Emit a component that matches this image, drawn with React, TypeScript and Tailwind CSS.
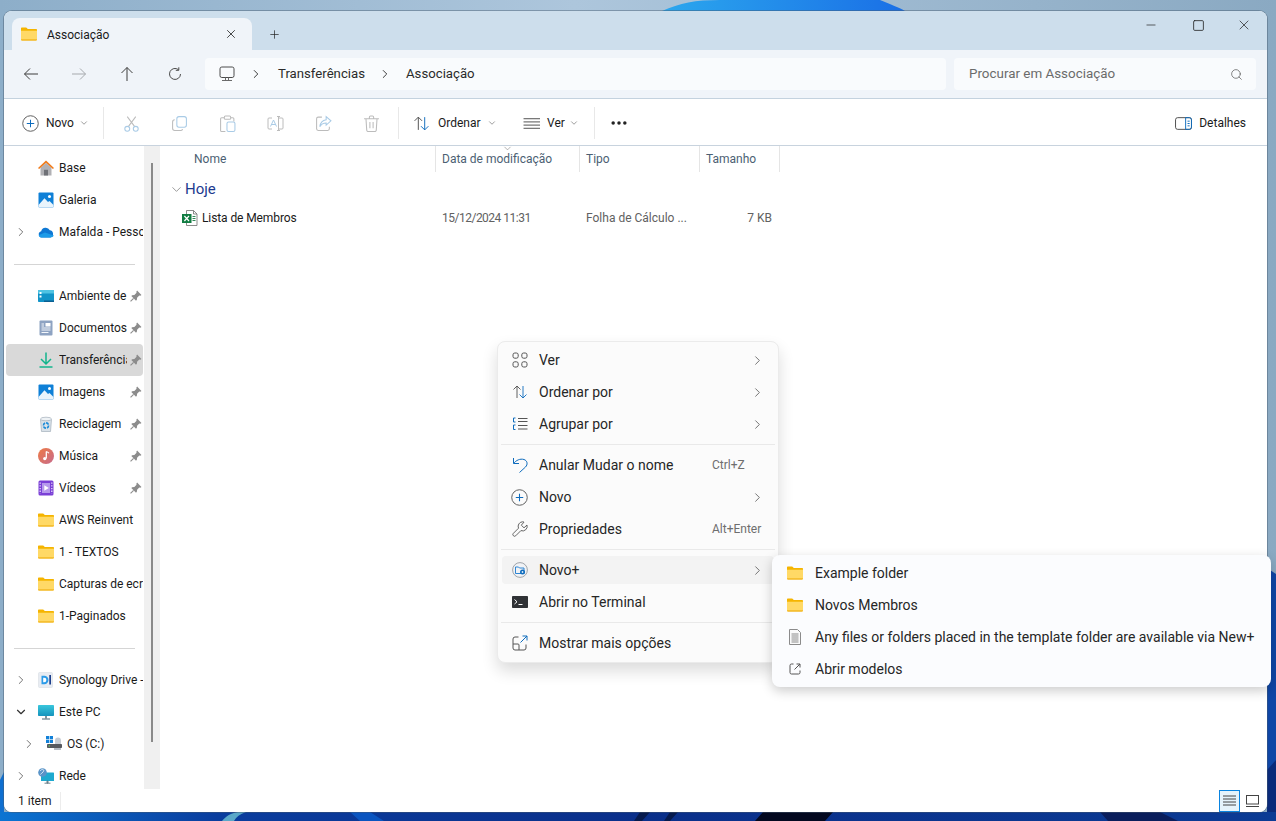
import type { ReactNode } from "react";
import { ChevronDown, ChevronRight, Ellipsis, Minus, Plus, Search, Square, X } from "lucide-react";

const font = { fontFamily: "Roboto, 'Liberation Sans', sans-serif" };

type IconProps = { size?: number };

function Svg({ size = 16, box = 16, children }: { size?: number; box?: number; children: ReactNode }) {
  return (
    <svg width={size} height={size} viewBox={`0 0 ${box} ${box}`} fill="none" className="shrink-0">
      {children}
    </svg>
  );
}

function FolderIcon({ size = 16 }: IconProps) {
  return (
    <Svg size={size}>
      <path d="M0 2.500c0-.6.4-1 1-1h4.200l1.600 1.600H15c.6 0 1 .4 1 1V6H0z" fill="#f5b400" />
      <path d="M0 4.800h16V13.500c0 .6-.4 1-1 1H1c-.6 0-1-.4-1-1z" fill="#ffd966" />
      <path d="M0 13.400h16v.2c0 .5-.4.900-1 .900H1c-.6 0-1-.4-1-.900z" fill="#eea800" />
    </Svg>
  );
}

function HomeIcon() {
  return (
    <Svg>
      <path d="M2.500 7.800 8 2.800l5.500 5V15.500h-11z" fill="#b1b1b5" />
      <rect x="6" y="9.800" width="4" height="5.700" fill="#6f7177" />
      <path d="M0 8 8 .5 16 8l-1.100 1.100L8 2.800 1.100 9.100z" fill="#f07a1a" />
    </Svg>
  );
}

function PictureIcon() {
  return (
    <Svg>
      <rect x="0.500" y="0.500" width="15" height="15" rx="1" fill="#0f80d7" />
      <circle cx="11.500" cy="4.500" r="1.500" fill="#fff" />
      <path d="M.5 13 6.500 6.200 10 10l1.500-1 4 4v1.500a1 1 0 0 1-1 1h-13a1 1 0 0 1-1-1z" fill="#e9f4fc" />
    </Svg>
  );
}

function CloudIcon() {
  return (
    <Svg>
      <path d="M3.600 13.500A3.200 3.200 0 0 1 3.200 7.200 4.600 4.600 0 0 1 11.800 6.300 3.700 3.700 0 0 1 12.500 13.500z" fill="#0f78d4" />
      <path d="M3.600 13.500c-1 0-2.600-.7-3-2.300L7 8.600l8.800 3c-.6 1.300-1.800 1.900-3.300 1.900z" fill="#1d9be8" />
    </Svg>
  );
}

function DesktopIcon() {
  return (
    <Svg>
      <rect x="0" y="2" width="16" height="12" rx="0.800" fill="#1294c8" />
      <rect x="0" y="2" width="16" height="3.500" fill="#4fc3e3" />
      <rect x="1.500" y="4" width="2" height="2" fill="#fff" />
      <rect x="1.500" y="7.500" width="2" height="2" fill="#fff" />
      <rect x="6" y="12.500" width="10" height="1.500" fill="#0b5f92" />
    </Svg>
  );
}

function DocsIcon() {
  return (
    <Svg>
      <rect x="1.500" y="0.500" width="13" height="15" rx="1" fill="#8ea3c2" />
      <rect x="7.500" y="3" width="5" height="3.500" fill="#fff" />
      <path d="M3.500 8h9M3.500 10h9M3.500 12.500h7M3.500 4h2.500M3.500 6h2.500" stroke="#f4f7fb" />
    </Svg>
  );
}

function DownloadIcon() {
  return (
    <Svg>
      <path d="M8 .5v11M3 7 8 12l5-5" stroke="#12b48c" strokeWidth="1.500" />
      <path d="M1.500 15h13" stroke="#12b48c" strokeWidth="1.500" />
    </Svg>
  );
}

function BinIcon() {
  return (
    <Svg>
      <path d="M2.500 3.500h11l-1 12h-9z" fill="#d9e1e8" stroke="#a4afba" strokeWidth="0.700" />
      <ellipse cx="8" cy="3" rx="5.500" ry="1.800" fill="#eef2f5" stroke="#a4afba" strokeWidth="0.700" />
      <circle cx="8" cy="9.500" r="2.600" fill="none" stroke="#1a8ad8" strokeWidth="1.600" strokeDasharray="3 1" />
    </Svg>
  );
}

function MusicIcon() {
  return (
    <Svg>
      <defs>
        <linearGradient id="mus" x1="0" y1="0" x2="1" y2="1">
          <stop offset="0" stopColor="#ee7a45" />
          <stop offset="1" stopColor="#c76b8c" />
        </linearGradient>
      </defs>
      <circle cx="8" cy="8" r="8" fill="url(#mus)" />
      <path d="M8.300 3.500v6.800" stroke="#fff" strokeWidth="1.300" />
      <path d="M8.300 3.500c1 .3 2.200.7 2.600 1.800" stroke="#fff" strokeWidth="1.100" />
      <circle cx="6.800" cy="10.600" r="1.700" fill="#fff" />
    </Svg>
  );
}

function VideoIcon() {
  return (
    <Svg>
      <rect x="0.500" y="0.500" width="15" height="15" rx="1.500" fill="#7a3fd6" />
      <rect x="4" y="3" width="8" height="10" fill="#b598ec" />
      <path d="M6.300 5.300v5.400L10.800 8z" fill="#fff" />
      <path d="M2.200 2.500v11M13.800 2.500v11" stroke="#e6dcfa" strokeWidth="1.300" strokeDasharray="1.300 1.400" />
    </Svg>
  );
}

function SynologyIcon() {
  return (
    <Svg>
      <rect x="0.500" y="0.500" width="14" height="15" rx="1" fill="#e8ecf2" stroke="#d2d8e0" strokeWidth="0.500" />
      <path d="M3.500 3.800h2.800a4.200 4.200 0 0 1 0 8.400H3.500z" fill="#2c9be8" />
      <path d="M5.200 5.800h1a2.200 2.200 0 0 1 0 4.400h-1z" fill="#fff" />
      <rect x="11.300" y="3" width="1.700" height="9.500" fill="#1d3f8c" />
    </Svg>
  );
}

function PcIcon() {
  return (
    <Svg>
      <defs>
        <linearGradient id="pc" x1="0" y1="0" x2="0" y2="1">
          <stop offset="0" stopColor="#39c6dc" />
          <stop offset="1" stopColor="#1694bd" />
        </linearGradient>
      </defs>
      <rect x="0" y="1" width="16" height="11" rx="0.800" fill="url(#pc)" />
      <path d="M7.300 12h1.400v2.500H7.300z" fill="#4b6473" />
      <path d="M4 15h8" stroke="#4b6473" />
    </Svg>
  );
}

function DriveIcon() {
  return (
    <Svg>
      <rect x="0" y="0" width="3.200" height="3.200" fill="#1280d8" />
      <rect x="3.800" y="0" width="3.200" height="3.200" fill="#1280d8" />
      <rect x="0" y="3.800" width="3.200" height="3.200" fill="#1280d8" />
      <rect x="3.800" y="3.800" width="3.200" height="3.200" fill="#1280d8" />
      <rect x="1" y="8" width="15" height="4" rx="0.800" fill="#56595f" />
      <rect x="2.500" y="9.500" width="1.500" height="1" fill="#5fd35f" />
      <path d="M9 8V4.500a3 3 0 0 1 6 0V8z" fill="#c6ccd4" />
      <rect x="8" y="12" width="7" height="2" fill="#b5bcc5" />
    </Svg>
  );
}

function NetworkIcon() {
  return (
    <Svg>
      <rect x="3" y="4.500" width="13" height="8.500" rx="0.600" fill="#1ea9cf" />
      <path d="M9 13h1v2h-1zM6.500 15.200h6" stroke="#4b6473" strokeWidth="0.800" />
      <circle cx="4.500" cy="4.500" r="4.300" fill="#5a94c8" />
      <path d="M2 3c1-1 2-2 3-1.500S6 3 5 4 3 5.500 2.500 6.500" stroke="#d7e8f4" strokeWidth="1" />
    </Svg>
  );
}

function ExcelIcon() {
  return (
    <Svg>
      <path d="M4.500 .5h7l3.500 3.500v11.500h-10.500z" fill="#fff" stroke="#6f6f6f" strokeWidth="0.800" />
      <path d="M11.500 .5V4H15" stroke="#6f6f6f" strokeWidth="0.800" />
      <path d="M10.500 6.500h3M10.500 8.500h3M10.500 10.500h3" stroke="#1d7a46" strokeWidth="0.900" />
      <rect x="0" y="4" width="9.500" height="9" fill="#107c41" />
      <path d="M2.400 6 7 11M7 6l-4.600 5" stroke="#fff" strokeWidth="1.200" />
    </Svg>
  );
}

function PinIcon() {
  return (
    <svg width="12" height="12" viewBox="0 0 11 11" className="shrink-0">
      <path d="M6.500 .5 10.500 4.500 9.500 5.200 8.500 5 6.500 7l-.2 2L5.500 9.800 1.200 5.500 2 4.700l2-.2 2-2-.2-1z" fill="#8c8c8c" />
      <path d="M3.300 7.700.5 10.500" stroke="#8c8c8c" />
    </svg>
  );
}

function PlusCircleIcon() {
  return (
    <Svg size={17}>
      <circle cx="8" cy="8" r="7.300" stroke="#5a5a5a" strokeWidth="0.900" />
      <path d="M8 4.500v7M4.500 8h7" stroke="#0f6cbd" strokeWidth="1" />
    </Svg>
  );
}

function SortIcon({ size = 17 }: IconProps) {
  return (
    <Svg size={size}>
      <path d="M5 14V2M1.500 5.500 5 2l3.500 3.500" stroke="#4f4f4f" strokeWidth="0.900" />
      <path d="M11 2v12M7.500 10.500 11 14l3.500-3.500" stroke="#0f6cbd" strokeWidth="0.900" />
    </Svg>
  );
}

const faint = "#a9cbe6";
const faintGray = "#bcbcbc";

function CutIcon() {
  return (
    <Svg size={17}>
      <path d="M4 1.500 11 11M12 1.500 5 11" stroke={faintGray} />
      <circle cx="4" cy="13" r="2.300" stroke={faint} />
      <circle cx="12" cy="13" r="2.300" stroke={faint} />
    </Svg>
  );
}

function CopyIcon() {
  return (
    <Svg size={17}>
      <rect x="5.500" y="1.500" width="9" height="10" rx="2" stroke={faint} />
      <path d="M3.500 4.500A2 2 0 0 0 1.500 6.500v6a2 2 0 0 0 2 2h6a2 2 0 0 0 1.500-1" stroke={faintGray} />
    </Svg>
  );
}

function PasteIcon() {
  return (
    <Svg size={17}>
      <path d="M5 2.500H2.500a1 1 0 0 0-1 1v11a1 1 0 0 0 1 1H6M11 2.500h2a1 1 0 0 1 1 1V6" stroke={faintGray} />
      <rect x="5" y="1" width="6" height="3" rx="1" stroke={faintGray} />
      <rect x="7.500" y="6.500" width="7.500" height="9" rx="1.500" stroke={faint} />
    </Svg>
  );
}

function RenameIcon() {
  return (
    <svg width="17" height="17" viewBox="0 0 17 17" fill="none" className="shrink-0">
      <path d="M5 3H2a1 1 0 0 0-1 1v9a1 1 0 0 0 1 1h3M12 3h3a1 1 0 0 1 1 1v9a1 1 0 0 1-1 1h-3" stroke={faintGray} />
      <path d="M3.500 11.500 6.500 5l3 6.500M4.500 9.500h4" stroke={faint} />
      <path d="M10 1.500h3M10 15.500h3M11.500 1.500v14" stroke={faintGray} />
    </svg>
  );
}

function ShareIcon() {
  return (
    <Svg size={17}>
      <path d="M6.500 2H3a1.500 1.500 0 0 0-1.500 1.500v9.500A1.500 1.500 0 0 0 3 14.500h9a1.500 1.500 0 0 0 1.500-1.500v-2" stroke={faintGray} />
      <path d="M10.500 1.500 15 5.500l-4.500 4V7.500C8 7.500 6 8.500 4.500 11c.5-3.500 2.500-6 6-6.500z" stroke={faint} />
    </Svg>
  );
}

function TrashIcon() {
  return (
    <Svg size={17}>
      <path d="M1 3.500h14M6 3.500V2a1 1 0 0 1 1-1h2a1 1 0 0 1 1 1v1.500M2.800 3.500l.7 10.500a1.500 1.500 0 0 0 1.500 1.500h6a1.500 1.500 0 0 0 1.500-1.500l.7-10.500M6.500 6.500v6M9.500 6.500v6" stroke={faintGray} />
    </Svg>
  );
}

function ViewLinesIcon() {
  return (
    <Svg size={17}>
      <path d="M.5 3.500h16M.5 6.500h16M.5 9.500h16M.5 12.500h16" stroke="#4a4a4a" strokeWidth="0.900" />
    </Svg>
  );
}

function DetailsIcon() {
  return (
    <Svg size={17}>
      <rect x="0.500" y="2.500" width="15" height="11" rx="2" stroke="#4a4a4a" strokeWidth="0.900" />
      <path d="M10 2.500h3.500a2 2 0 0 1 2 2v7a2 2 0 0 1-2 2H10z" stroke="#0f6cbd" strokeWidth="0.900" />
      <path d="M11.800 5.800h2M11.800 8h2M11.800 10.200h2" stroke="#0f6cbd" strokeWidth="0.900" />
    </Svg>
  );
}

function Arrow({ d, color = "#3d3d3d" }: { d: string; color?: string }) {
  return (
    <Svg size={16}>
      <path d={d} stroke={color} strokeWidth="1" />
    </Svg>
  );
}

function RefreshIcon() {
  return (
    <Svg size={14} box={14}>
      <path d="M12.500 7A5.500 5.500 0 1 1 10.500 2.700" stroke="#4a4a4a" strokeWidth="1" />
      <path d="M10.800 .3v3h-3" stroke="#4a4a4a" strokeWidth="1" />
    </Svg>
  );
}

function MonitorIcon() {
  return (
    <Svg>
      <rect x="1" y="1" width="14" height="10.500" rx="1.800" stroke="#4c4c4c" strokeWidth="1" />
      <path d="M3 14.500h10M6.500 11.500v3M9.500 11.500v3" stroke="#6b6b6b" />
    </Svg>
  );
}

function GridIcon() {
  return (
    <Svg>
      <rect x="1" y="1" width="5.200" height="5.200" rx="1.800" stroke="#555" />
      <rect x="9.800" y="1" width="5.200" height="5.200" rx="1.800" stroke="#555" />
      <rect x="1" y="9.800" width="5.200" height="5.200" rx="1.800" stroke="#555" />
      <rect x="9.800" y="9.800" width="5.200" height="5.200" rx="1.800" stroke="#555" />
    </Svg>
  );
}

function GroupIcon() {
  return (
    <Svg>
      <path d="M3.500 2H1.500v4h2M3.500 9H1.500v4.500h2" stroke="#0f6cbd" />
      <path d="M6 2.500h9.500M6 5.500h9.500M6 9.500h9.500M6 13h9.500" stroke="#555" />
    </Svg>
  );
}

function UndoIcon() {
  return (
    <Svg>
      <path d="M1.500 1v5.500H7" stroke="#0f6cbd" />
      <path d="M1.800 6.200C4 3.500 8 1.300 12 2.500c3.500 1.200 4 5 1.500 7.500L7.500 15.500" stroke="#0f6cbd" />
    </Svg>
  );
}

function WrenchIcon() {
  return (
    <Svg>
      <path d="M10.500.8a4.600 4.600 0 0 0-4 6.400L1.300 12.400a1.700 1.700 0 0 0 2.400 2.400l5.200-5.200a4.600 4.600 0 0 0 6.100-5.600L12 6.800 9.300 4.200 12 1.100a4.600 4.600 0 0 0-1.500-.3z" stroke="#555" strokeWidth="0.900" />
    </Svg>
  );
}

function NovoPlusIcon() {
  return (
    <Svg>
      <circle cx="8" cy="8" r="7.400" fill="#f1f3f6" stroke="#8a8f96" strokeWidth="0.800" />
      <path d="M3.500 5h3l1 1h4.500v5.500H3.500z" stroke="#1a7ad0" strokeWidth="0.900" />
      <circle cx="10.500" cy="10" r="2.500" fill="#0f6cbd" />
      <path d="M9.500 10h2M10.500 9v2" stroke="#fff" strokeWidth="0.700" />
    </Svg>
  );
}

function TerminalIcon() {
  return (
    <Svg>
      <rect x="0" y="2" width="16" height="12" rx="0.800" fill="#303236" />
      <path d="M2.500 5.500 5 7.800 2.500 10" stroke="#fff" />
      <path d="M6.500 10.500h4" stroke="#fff" />
    </Svg>
  );
}

function MoreOptionsIcon() {
  return (
    <Svg>
      <path d="M6.500 2H3a2 2 0 0 0-2 2v9a2 2 0 0 0 2 2h9a2 2 0 0 0 2-2V9.500" stroke="#555" />
      <path d="M1 9h5a1 1 0 0 1 1 1v5" stroke="#555" />
      <path d="M8.500 7.500 15 1M10.500 1H15v4.500" stroke="#0f6cbd" />
    </Svg>
  );
}

function PageIcon() {
  return (
    <Svg>
      <path d="M2.500 .5h8l3 3v12h-11z" fill="#fafafa" stroke="#8b8b8b" />
      <path d="M4.500 5h7M4.500 7h7M4.500 9h7M4.500 11h7M4.500 13h7" stroke="#8b8b8b" />
    </Svg>
  );
}

function OpenIcon() {
  return (
    <svg width="12" height="12" viewBox="0 0 12 12" fill="none" className="shrink-0">
      <path d="M4.500 1H2.500A1.500 1.500 0 0 0 1 2.500v7A1.500 1.500 0 0 0 2.500 11h7A1.500 1.500 0 0 0 11 9.500V7.500" stroke="#555" />
      <path d="M5.500 6.500 11 1M7.500 1H11v3.500" stroke="#555" />
    </svg>
  );
}

type NavItem = {
  label: string;
  icon: ReactNode;
  pin?: boolean;
  selected?: boolean;
  chevron?: "right" | "down";
  nested?: boolean;
};

const quickAccess: NavItem[] = [
  { label: "Ambiente de trabalho", icon: <DesktopIcon />, pin: true },
  { label: "Documentos", icon: <DocsIcon />, pin: true },
  { label: "Transferências", icon: <DownloadIcon />, pin: true, selected: true },
  { label: "Imagens", icon: <PictureIcon />, pin: true },
  { label: "Reciclagem", icon: <BinIcon />, pin: true },
  { label: "Música", icon: <MusicIcon />, pin: true },
  { label: "Vídeos", icon: <VideoIcon />, pin: true },
  { label: "AWS Reinvent", icon: <FolderIcon /> },
  { label: "1 - TEXTOS", icon: <FolderIcon /> },
  { label: "Capturas de ecrã", icon: <FolderIcon /> },
  { label: "1-Paginados", icon: <FolderIcon /> },
];

function SidebarRow({ item }: { item: NavItem }) {
  return (
    <div
      className={`ml-[2px] mr-[1px] flex h-[32px] items-center rounded-[4px] text-[12px] text-[#1a1a1a] ${
        item.selected ? "bg-[#d9d9d9]" : ""
      } ${item.nested ? "pl-[40px]" : "pl-[32px]"}`}
    >
      <span className="flex w-[16px] shrink-0 justify-center">{item.icon}</span>
      <span className={`ml-[5px] overflow-hidden whitespace-nowrap ${item.pin ? "w-[68px]" : "w-[84px]"}`}>
        {item.label}
      </span>
      {item.pin && (
        <span className="ml-[3px]">
          <PinIcon />
        </span>
      )}
    </div>
  );
}

function SidebarTree({ item }: { item: NavItem }) {
  return (
    <div className="relative">
      <SidebarRow item={item} />
      {item.chevron === "right" && (
        <ChevronRight
          size={14}
          strokeWidth={1.600}
          color="#6a6a6a"
          className={`absolute top-[9px] ${item.nested ? "left-[18px]" : "left-[10px]"}`}
        />
      )}
      {item.chevron === "down" && (
        <ChevronDown size={14} strokeWidth={2} color="#333" className="absolute left-[10px] top-[9px]" />
      )}
    </div>
  );
}

function Sidebar() {
  return (
    <div className="w-[140px] shrink-0 pt-[6px]">
      <SidebarRow item={{ label: "Base", icon: <HomeIcon /> }} />
      <SidebarRow item={{ label: "Galeria", icon: <PictureIcon /> }} />
      <SidebarTree item={{ label: "Mafalda - Pessoal", icon: <CloudIcon />, chevron: "right" }} />
      <div className="flex h-[32px] items-center pl-[10px]">
        <div className="h-px w-[121px] bg-[#d5d5d5]" />
      </div>
      {quickAccess.map((item) => (
        <SidebarRow key={item.label} item={item} />
      ))}
      <div className="flex h-[32px] items-center pl-[10px]">
        <div className="h-px w-[121px] bg-[#d5d5d5]" />
      </div>
      <SidebarTree item={{ label: "Synology Drive - Mafalda", icon: <SynologyIcon />, chevron: "right" }} />
      <SidebarTree item={{ label: "Este PC", icon: <PcIcon />, chevron: "down" }} />
      <SidebarTree item={{ label: "OS (C:)", icon: <DriveIcon />, chevron: "right", nested: true }} />
      <SidebarTree item={{ label: "Rede", icon: <NetworkIcon />, chevron: "right" }} />
    </div>
  );
}

function ToolButton({ children, className = "" }: { children: ReactNode; className?: string }) {
  return <div className={`flex w-[48px] shrink-0 justify-center ${className}`}>{children}</div>;
}

function Toolbar() {
  return (
    <div className="flex h-[47px] shrink-0 items-center border-b border-[#c8d3de] bg-white pt-[2px] text-[12px] text-[#1a1a1a]">
      <div className="ml-[18px] flex w-[81px] items-center">
        <PlusCircleIcon />
        <span className="ml-[7px]">Novo</span>
        <ChevronDown size={10} color="#8a8a8a" className="ml-[5px]" />
      </div>
      <div className="h-[32px] w-px bg-[#e8e8e8]" />
      <div className="ml-[3px] flex">
        <ToolButton>
          <CutIcon />
        </ToolButton>
        <ToolButton>
          <CopyIcon />
        </ToolButton>
        <ToolButton>
          <PasteIcon />
        </ToolButton>
        <ToolButton>
          <RenameIcon />
        </ToolButton>
        <ToolButton>
          <ShareIcon />
        </ToolButton>
        <ToolButton>
          <TrashIcon />
        </ToolButton>
      </div>
      <div className="ml-[3px] h-[32px] w-px bg-[#e8e8e8]" />
      <div className="ml-[14px] flex w-[110px] items-center">
        <SortIcon />
        <span className="ml-[8px]">Ordenar</span>
        <ChevronDown size={10} color="#8a8a8a" className="ml-[6px]" />
      </div>
      <div className="flex w-[71px] items-center">
        <ViewLinesIcon />
        <span className="ml-[7px]">Ver</span>
        <ChevronDown size={10} color="#8a8a8a" className="ml-[4px]" />
      </div>
      <div className="h-[32px] w-px bg-[#e8e8e8]" />
      <Ellipsis size={20} strokeWidth={2.200} color="#222" className="ml-[14px]" />
      <div className="ml-auto mr-[21px] flex items-center">
        <DetailsIcon />
        <span className="ml-[7px]">Detalhes</span>
      </div>
    </div>
  );
}

function ColumnHeader({ label, className }: { label: string; className: string }) {
  return (
    <div className={`flex h-[26px] items-center border-r border-[#e5e5e5] ${className}`}>
      <span className="text-[12px] text-[#4c5f73]">{label}</span>
    </div>
  );
}

function FileList() {
  return (
    <div className="relative min-w-0 flex-1">
      <div className="flex">
        <ColumnHeader label="Nome" className="w-[276px] pl-[34px]" />
        <ColumnHeader label="Data de modificação" className="w-[144px] pl-[6px]" />
        <ColumnHeader label="Tipo" className="w-[120px] pl-[6px]" />
        <ColumnHeader label="Tamanho" className="w-[80px] pl-[6px]" />
      </div>
      <ChevronDown size={11} strokeWidth={1.200} color="#777" className="absolute left-[342px] top-[-3px]" />
      <div className="mt-[6px] flex h-[22px] items-center pl-[9px]">
        <ChevronDown size={15} strokeWidth={1.100} color="#6f6f6f" />
        <span className="ml-[1px] text-[15px] text-[#1d3a8f]">Hoje</span>
      </div>
      <div className="mt-[7px] flex h-[21px] items-center text-[12px]">
        <div className="flex w-[276px] items-center pl-[22px] text-[#1a1a1a]">
          <ExcelIcon />
          <span className="ml-[4px] tracking-[-0.1px]">Lista de Membros</span>
        </div>
        <span className="w-[144px] pl-[6px] tracking-[-0.5px] text-[#616161]">15/12/2024 11:31</span>
        <span className="w-[120px] pl-[6px] text-[#616161]">Folha de Cálculo ...</span>
        <span className="w-[72px] text-right text-[#616161]">7 KB</span>
      </div>
    </div>
  );
}

type MenuEntry = {
  label: string;
  icon: ReactNode;
  shortcut?: string;
  arrow?: boolean;
  active?: boolean;
};

function MenuRow({ entry }: { entry: MenuEntry }) {
  return (
    <div className="flex h-[32px] items-center px-[4px] py-[2px]">
      <div
        className={`flex h-[28px] w-full items-center rounded-[4px] pl-[9px] text-[14px] text-[#262626] ${
          entry.active ? "bg-[#f3f3f3]" : ""
        }`}
      >
        <span className="flex w-[17px] shrink-0 justify-center">{entry.icon}</span>
        <span className="ml-[11px] whitespace-nowrap">{entry.label}</span>
        {entry.shortcut && <span className="absolute left-[214px] text-[12px] text-[#6e6e6e]">{entry.shortcut}</span>}
        {entry.arrow && <ChevronRight size={15} strokeWidth={1.300} color="#555" className="ml-auto mr-[9px]" />}
      </div>
    </div>
  );
}

function MenuSeparator() {
  return (
    <div className="flex h-[9px] items-center px-[3px]">
      <div className="h-px w-full bg-[#e9e9e9]" />
    </div>
  );
}

function ContextMenu() {
  return (
    <div className="absolute left-[497px] top-[341px] h-[322px] w-[282px] rounded-[8px] border border-[#ebebeb] bg-[#fbfbfb] pt-[2px] shadow-[0_8px_16px_rgba(0,0,0,0.14)]">
      <MenuRow entry={{ label: "Ver", icon: <GridIcon />, arrow: true }} />
      <MenuRow entry={{ label: "Ordenar por", icon: <SortIcon size={16} />, arrow: true }} />
      <MenuRow entry={{ label: "Agrupar por", icon: <GroupIcon />, arrow: true }} />
      <MenuSeparator />
      <MenuRow entry={{ label: "Anular Mudar o nome", icon: <UndoIcon />, shortcut: "Ctrl+Z" }} />
      <MenuRow entry={{ label: "Novo", icon: <PlusCircleIcon />, arrow: true }} />
      <MenuRow entry={{ label: "Propriedades", icon: <WrenchIcon />, shortcut: "Alt+Enter" }} />
      <MenuSeparator />
      <MenuRow entry={{ label: "Novo+", icon: <NovoPlusIcon />, arrow: true, active: true }} />
      <MenuRow entry={{ label: "Abrir no Terminal", icon: <TerminalIcon /> }} />
      <MenuSeparator />
      <MenuRow entry={{ label: "Mostrar mais opções", icon: <MoreOptionsIcon /> }} />
    </div>
  );
}

function SubMenu() {
  const rows = [
    { label: "Example folder", icon: <FolderIcon /> },
    { label: "Novos Membros", icon: <FolderIcon /> },
    { label: "Any files or folders placed in the template folder are available via New+", icon: <PageIcon /> },
    { label: "Abrir modelos", icon: <OpenIcon /> },
  ];
  return (
    <div className="absolute left-[772px] top-[555px] h-[132px] w-[499px] rounded-[8px] bg-[#fbfcfe] pt-[2px] shadow-[0_4px_12px_rgba(0,0,0,0.2)]">
      {rows.map((row) => (
        <div key={row.label} className="flex h-[32px] items-center pl-[15px] text-[14px] text-[#262626]">
          <span className="flex w-[16px] shrink-0 justify-center">{row.icon}</span>
          <span className="ml-[12px] whitespace-nowrap">{row.label}</span>
        </div>
      ))}
    </div>
  );
}

function Wallpaper() {
  return (
    <svg className="absolute inset-0" width="1276" height="821" viewBox="0 0 1276 821">
      <defs>
        <linearGradient id="sky" x1="0" y1="0" x2="1" y2="0">
          <stop offset="0" stopColor="#8daec9" />
          <stop offset="0.45" stopColor="#adc6dc" />
          <stop offset="1" stopColor="#8aa9c2" />
        </linearGradient>
        <linearGradient id="bloom" x1="0" y1="0" x2="1" y2="0">
          <stop offset="0" stopColor="#2ba7ee" />
          <stop offset="1" stopColor="#1a6fe6" />
        </linearGradient>
        <linearGradient id="floor" x1="0" y1="0" x2="1" y2="0">
          <stop offset="0" stopColor="#0b74d2" />
          <stop offset="0.17" stopColor="#0a3d9e" />
          <stop offset="0.5" stopColor="#0a2f8a" />
          <stop offset="1" stopColor="#0b3b94" />
        </linearGradient>
      </defs>
      <rect width="1276" height="821" fill="url(#sky)" />
      <path d="M662 11C680 3 695 0 720 0H880C890 4 900 8 905 11Z" fill="url(#bloom)" />
      <path d="M1267 568 1276 574V821H1267Z" fill="#0f46a6" />
      <path d="M1267 770 1276 760V821H1267Z" fill="#0a2a7a" />
      <path d="M0 780 4 772V812H0Z" fill="#0f6fd0" />
      <rect y="812" width="1276" height="9" fill="url(#floor)" />
      <path d="M222 821c4-5 9-8 16-9h8c-6 2-10 5-12 9z" fill="#5aa8c8" />
      <path d="M350 812h20l14 9h-24z" fill="#0a55c0" />
      <path d="M640 812h10l-8 9h-8zM670 812h8l-8 9h-6z" fill="#061a4d" />
      <path d="M755 821l8-9h70l-8 9z" fill="#03081f" />
      <path d="M1100 812h60l18 9h-70z" fill="#0a1e5c" />
    </svg>
  );
}

export default function App() {
  return (
    <div className="relative h-[821px] w-[1276px] overflow-hidden" style={font}>
      <Wallpaper />
      <div className="absolute left-[4px] top-[11px] flex h-[801px] w-[1263px] flex-col overflow-hidden rounded-[8px] bg-white shadow-[0_0_0_1px_rgba(70,90,110,0.45)]">
        <div className="flex h-[39px] shrink-0 items-end bg-[#cddeec] pl-[8px]">
          <div className="flex h-[32px] w-[240px] items-center rounded-t-[8px] bg-[#f0f4f9] pl-[9px] text-[12px] text-[#1a1a1a]">
            <FolderIcon />
            <span className="ml-[10px] pt-[2px]">Associação</span>
            <X size={14} strokeWidth={1.400} color="#222" className="ml-auto mr-[14px]" />
          </div>
          <Plus size={13} strokeWidth={1.300} color="#222" className="mb-[9px] ml-[16px]" />
          <div className="mb-[13px] ml-auto flex h-[24px] items-center self-end">
            <Minus size={14} strokeWidth={1.200} color="#222" className="mr-[34px]" />
            <Square size={13} strokeWidth={1.500} color="#222" className="mr-[31px]" />
            <X size={16} strokeWidth={1.100} color="#222" className="mr-[15px]" />
          </div>
        </div>

        <div className="flex h-[49px] shrink-0 items-center border-b border-[#c4d2de] bg-[#f0f4f9] pl-[19px] pr-[11px]">
          <div className="flex w-[182px] shrink-0 items-center">
            <span className="w-[48px]">
              <Arrow d="M15 8H1.500M7 2.500 1.500 8 7 13.500" />
            </span>
            <span className="w-[48px]">
              <Arrow d="M1 8h13.500M9 2.500 14.500 8 9 13.500" color="#a6a9ad" />
            </span>
            <span className="w-[49px]">
              <Arrow d="M8 15V1.500M2.500 7 8 1.500 13.500 7" />
            </span>
            <RefreshIcon />
          </div>
          <div className="flex h-[32px] w-[741px] shrink-0 items-center rounded-[4px] bg-[#f9fbfd] pl-[14px] text-[13.2px] text-[#2b2b2b]">
            <MonitorIcon />
            <ChevronRight size={14} strokeWidth={1.500} color="#222" className="ml-[14px]" />
            <span className="ml-[15px]">Transferências</span>
            <ChevronRight size={14} strokeWidth={1.500} color="#222" className="ml-[13px]" />
            <span className="ml-[14px]">Associação</span>
          </div>
          <div className="ml-[8px] flex h-[32px] flex-1 items-center rounded-[4px] bg-[#f9fbfd] pl-[15px] pr-[13px] text-[13.4px] text-[#6b6b6b]">
            <span>Procurar em Associação</span>
            <Search size={13} strokeWidth={1.300} color="#555" className="ml-auto" />
          </div>
        </div>

        <Toolbar />

        <div className="flex min-h-0 flex-1">
          <Sidebar />
          <div className="relative w-[16px] shrink-0 bg-[#f0f0f0]">
            <div className="absolute left-[7px] top-[17px] h-[579px] w-[2px] bg-[#8a8a8a]" />
          </div>
          <FileList />
        </div>

        <div className="flex h-[23px] shrink-0 items-center bg-white pl-[14px] text-[12px] text-[#1a1a1a]">
          <span className="w-[43px] border-r border-[#ececec]">1 item</span>
          <div className="ml-auto flex items-center pr-[8px]">
            <div className="flex h-[22px] w-[21px] items-center justify-center border border-[#0a84e0] bg-[#e5f3fb]">
              <svg width="13" height="11" viewBox="0 0 13 11" fill="none">
                <path d="M0 1h13M0 4h13M0 7h13M0 10h13" stroke="#444" />
              </svg>
            </div>
            <div className="ml-[5px] flex w-[14px] justify-center">
              <svg width="13" height="12" viewBox="0 0 13 12" fill="none">
                <rect x="0.500" y="0.500" width="12" height="8.500" stroke="#444" />
                <path d="M0 11.500h13" stroke="#444" />
              </svg>
            </div>
          </div>
        </div>
      </div>
      <ContextMenu />
      <SubMenu />
    </div>
  );
}
